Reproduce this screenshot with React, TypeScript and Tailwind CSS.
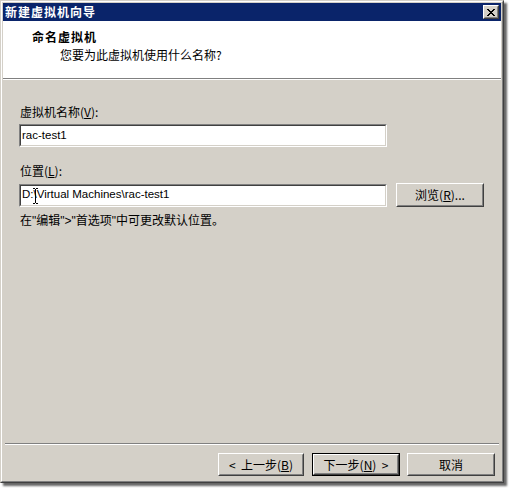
import React from "react";

const cjk = { fontFamily: '"Noto Sans CJK SC", "Liberation Sans", sans-serif' };
const lat = { fontFamily: '"Liberation Sans", sans-serif' };

function Raised({ children, className = "", def = false }: { children: React.ReactNode; className?: string; def?: boolean }) {
  const inner = (
    <div className="h-full border border-t-white border-l-white border-r-[#404040] border-b-[#404040]">
      <div className="h-full flex items-center justify-center border border-t-[#D4D0C8] border-l-[#D4D0C8] border-r-[#808080] border-b-[#808080]">
        {children}
      </div>
    </div>
  );
  if (def) return <div className={`border border-black ${className}`}>{inner}</div>;
  return <div className={className}>{inner}</div>;
}

function Sunken({ children, className = "" }: { children: React.ReactNode; className?: string }) {
  return (
    <div className={`border border-t-[#808080] border-l-[#808080] border-r-white border-b-white ${className}`}>
      <div className="h-full bg-white border border-t-[#404040] border-l-[#404040] border-r-[#D4D0C8] border-b-[#D4D0C8] flex items-center pl-[1px] relative">
        {children}
      </div>
    </div>
  );
}

export default function App() {
  return (
    <div className="w-[509px] h-[488px] bg-white relative overflow-hidden" style={cjk}>
      <div className="w-[504px] h-[483px] shadow-[3px_3px_2px_rgba(0,0,0,0.6)] border border-t-[#D4D0C8] border-l-[#D4D0C8] border-r-[#404040] border-b-[#404040]">
        <div className="h-full border border-t-white border-l-white border-r-[#808080] border-b-[#808080]">
          <div className="h-full bg-[#D4D0C8] p-[1px] flex flex-col">
            {/* title bar */}
            <div className="h-[18px] bg-[#0A246A] flex items-center justify-between pl-[2px] pr-[2px] shrink-0">
              <span className="text-white font-bold text-[12px] leading-[14px] tracking-[1px]">新建虚拟机向导</span>
              <Raised className="w-[16px] h-[14px] bg-[#D4D0C8]">
                <svg width="8" height="7" viewBox="0 0 8 7" shapeRendering="crispEdges">
                  <path d="M0 0h2v1h-2zM6 0h2v1h-2zM1 1h2v1h-2zM5 1h2v1h-2zM2 2h4v1h-4zM3 3h2v1h-2zM2 4h4v1h-4zM1 5h2v1h-2zM5 5h2v1h-2zM0 6h2v1h-2zM6 6h2v1h-2z" fill="#000" />
                </svg>
              </Raised>
            </div>
            {/* header */}
            <div className="h-[57px] bg-white shrink-0 pl-[29px] pt-[9px]">
              <div className="font-bold text-[12px] leading-[14px] tracking-[1px] text-black">命名虚拟机</div>
              <div className="text-[12px] leading-[14px] text-black mt-[4px] ml-[28px]">您要为此虚拟机使用什么名称?</div>
            </div>
            <div className="h-[1px] bg-[#808080] shrink-0" />
            <div className="h-[1px] bg-white shrink-0" />
            {/* body */}
            <div className="flex-1 flex flex-col">
              <div className="pl-[16px] pt-[25px]">
                <div className="text-[12px] leading-[14px] text-black ml-[1px]">
                  虚拟机名称(<span className="underline">V</span>):
                </div>
                <Sunken className="w-[368px] h-[23px] mt-[5px]">
                  <span className="text-[11.5px] text-black" style={lat}>rac-test1</span>
                </Sunken>
                <div className="text-[12px] leading-[14px] text-black ml-[1px] mt-[17px]">
                  位置(<span className="underline">L</span>):
                </div>
                <div className="flex items-center mt-[5px]">
                  <Sunken className="w-[368px] h-[23px]">
                    <span className="text-[11.5px] text-black" style={lat}>D:\Virtual Machines\rac-test1</span>
                    <svg className="absolute left-[12px] top-[2px]" width="5" height="16" viewBox="0 0 5 16" shapeRendering="crispEdges">
                      <path d="M0 0h2v1h-2zM3 0h2v1h-2zM2 1h1v14h-1zM0 15h2v1h-2zM3 15h2v1h-2z" fill="#000" />
                    </svg>
                  </Sunken>
                  <Raised className="w-[88px] h-[24px] ml-[9px] bg-[#D4D0C8]">
                    <span className="text-[12px] text-black">
                      浏览(<span className="underline">R</span>)...
                    </span>
                  </Raised>
                </div>
                <div className="text-[12px] leading-[14px] text-black ml-[1px] mt-[6px]">
                  在<span style={lat}>"</span>编辑<span style={lat}>"&gt;"</span>首选项<span style={lat}>"</span>中可更改默认位置。
                </div>
              </div>
              <div className="flex-1" />
              <div className="h-[1px] bg-[#808080] mx-[2px]" />
              <div className="h-[1px] bg-white mx-[2px]" />
              <div className="flex justify-end pr-[6px] pt-[8px] pb-[4px] gap-[8px]">
                <Raised className="w-[86px] h-[23px] bg-[#D4D0C8]">
                  <span className="text-[12px] text-black whitespace-pre">
                    {"<  "}上一步(<span className="underline">B</span>)
                  </span>
                </Raised>
                <Raised def className="w-[88px] h-[23px] bg-[#D4D0C8]">
                  <span className="text-[12px] text-black whitespace-pre">
                    下一步(<span className="underline">N</span>){"  >"}
                  </span>
                </Raised>
                <Raised className="w-[88px] h-[23px] bg-[#D4D0C8] -ml-[1px]">
                  <span className="text-[12px] text-black">取消</span>
                </Raised>
              </div>
            </div>
          </div>
        </div>
      </div>
    </div>
  );
}
